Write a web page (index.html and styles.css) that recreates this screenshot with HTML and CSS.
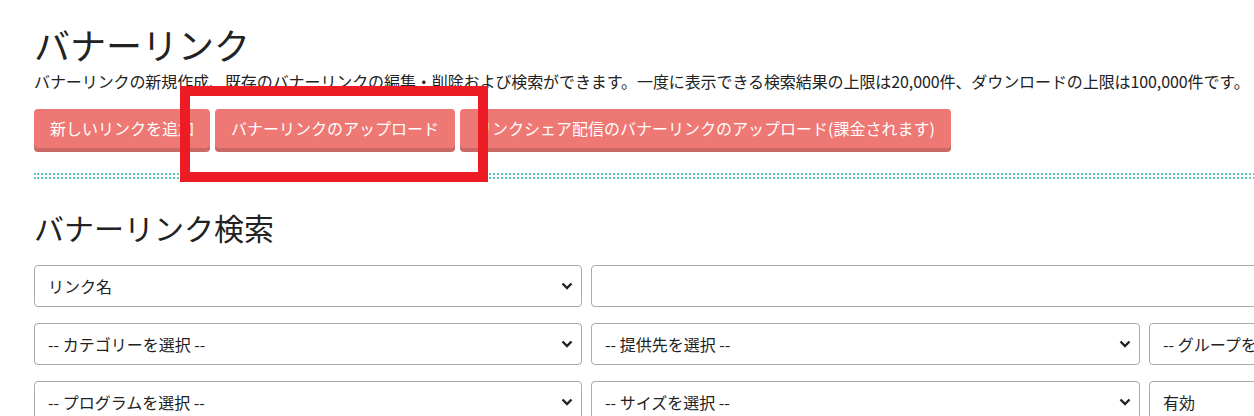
FILE: index.html
```html
<!DOCTYPE html>
<html lang="ja">
<head>
<meta charset="utf-8">
<title>バナーリンク</title>
<link rel="stylesheet" href="styles.css">
</head>
<body>
<div class="page">
  <h1 class="title">バナーリンク</h1>
  <p class="desc">バナーリンクの新規作成、既存のバナーリンクの編集・削除および検索ができます。一度に表示できる検索結果の上限は20,000件、ダウンロードの上限は100,000件です。</p>
  <div class="actions">
    <button class="btn">新しいリンクを追加</button>
    <button class="btn">バナーリンクのアップロード</button>
    <button class="btn">リンクシェア配信のバナーリンクのアップロード(課金されます)</button>
  </div>
  <div class="divider"></div>
  <h2 class="subtitle">バナーリンク検索</h2>
  <div class="form">
    <div class="field select"><span>リンク名</span><svg class="chev" viewBox="0 0 12 8"><path d="M1.5 1.5 L6 6 L10.5 1.5" fill="none" stroke="#222" stroke-width="2.4"/></svg></div>
    <div class="field wide"></div>
    <div class="field select"><span>-- カテゴリーを選択 --</span><svg class="chev" viewBox="0 0 12 8"><path d="M1.5 1.5 L6 6 L10.5 1.5" fill="none" stroke="#222" stroke-width="2.4"/></svg></div>
    <div class="field select"><span>-- 提供先を選択 --</span><svg class="chev" viewBox="0 0 12 8"><path d="M1.5 1.5 L6 6 L10.5 1.5" fill="none" stroke="#222" stroke-width="2.4"/></svg></div>
    <div class="field select"><span>-- グループを選択 --</span><svg class="chev" viewBox="0 0 12 8"><path d="M1.5 1.5 L6 6 L10.5 1.5" fill="none" stroke="#222" stroke-width="2.4"/></svg></div>
    <div class="field select"><span>-- プログラムを選択 --</span><svg class="chev" viewBox="0 0 12 8"><path d="M1.5 1.5 L6 6 L10.5 1.5" fill="none" stroke="#222" stroke-width="2.4"/></svg></div>
    <div class="field select"><span>-- サイズを選択 --</span><svg class="chev" viewBox="0 0 12 8"><path d="M1.5 1.5 L6 6 L10.5 1.5" fill="none" stroke="#222" stroke-width="2.4"/></svg></div>
    <div class="field select"><span>有効</span><svg class="chev" viewBox="0 0 12 8"><path d="M1.5 1.5 L6 6 L10.5 1.5" fill="none" stroke="#222" stroke-width="2.4"/></svg></div>
  </div>
</div>
<div class="highlight"></div>
</body>
</html>
```

FILE: styles.css
```css
html, body {
  margin: 0;
  padding: 0;
  background: #fff;
  overflow: hidden;
}
body {
  width: 1254px;
  height: 416px;
  position: relative;
  font-family: "Noto Sans CJK JP", "Noto Sans", sans-serif;
  color: #222;
}
.page {
  padding: 20px 0 0 34px;
  width: 1800px;
}
.title {
  margin: 0;
  font-size: 36px;
  font-weight: 400;
  line-height: 48px;
  color: #222;
}
.desc {
  margin: 2px 0 0;
  font-size: 16px;
  line-height: 22px;
  letter-spacing: -0.09px;
  color: #222;
  white-space: nowrap;
}
.actions {
  display: flex;
  gap: 5px;
  margin-top: 17px;
}
.btn {
  font-family: inherit;
  font-size: 16px;
  color: #fff;
  background: #ee7873;
  border: none;
  border-radius: 4px;
  box-shadow: 0 4px 0 #c96a66;
  height: 39px;
  padding: 0 16px;
  line-height: 39px;
}
.divider {
  margin-top: 25px;
  height: 2px;
  border-top: 2px dotted #5ec8c8;
  border-bottom: 2px dotted #5ec8c8;
}
.subtitle {
  margin: 28px 0 0;
  font-size: 30px;
  font-weight: 400;
  line-height: 40px;
  color: #222;
}
.form {
  margin-top: 18px;
  display: grid;
  grid-template-columns: 548px 549px 549px;
  column-gap: 9px;
  row-gap: 16px;
}
.field {
  box-sizing: border-box;
  height: 42px;
  border: 1px solid #a9a9a9;
  border-radius: 4px;
  background: #fff;
  display: flex;
  align-items: center;
  padding: 0 8px 0 13px;
  font-size: 16px;
  color: #222;
}
.field.wide {
  grid-column: span 2;
}
.field span {
  flex: 1;
}
.chev {
  width: 12px;
  height: 8px;
}
.highlight {
  position: absolute;
  left: 180px;
  top: 86px;
  width: 308px;
  height: 96px;
  box-sizing: border-box;
  border: 10px solid #ed1c24;
}
```
